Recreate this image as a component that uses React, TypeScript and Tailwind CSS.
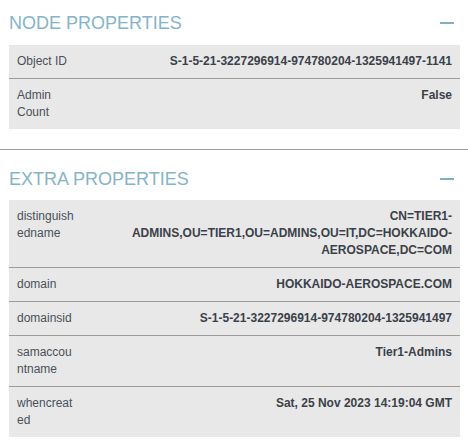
import React from "react";

type Prop = { label: string; value: string };

const nodeProps: Prop[] = [
  { label: "Object ID", value: "S-1-5-21-3227296914-974780204-1325941497-1141" },
  { label: "Admin Count", value: "False" },
];

const extraProps: Prop[] = [
  {
    label: "distinguishedname",
    value: "CN=TIER1-ADMINS,OU=TIER1,OU=ADMINS,OU=IT,DC=HOKKAIDO-AEROSPACE,DC=COM",
  },
  { label: "domain", value: "HOKKAIDO-AEROSPACE.COM" },
  { label: "domainsid", value: "S-1-5-21-3227296914-974780204-1325941497" },
  { label: "samaccountname", value: "Tier1-Admins" },
  { label: "whencreated", value: "Sat, 25 Nov 2023 14:19:04 GMT" },
];

const PropTable: React.FC<{ rows: Prop[] }> = ({ rows }) => (
  <div className="ml-[9px] mr-[8px] bg-[#e8e8e8]">
    {rows.map((row, i) => (
      <div
        key={row.label}
        className={`flex py-[8px] text-[12px] leading-[17px] ${
          i > 0 ? "border-t border-[#9c9c9c]" : ""
        }`}
      >
        <div className="w-[60px] shrink-0 ml-[8px] break-words text-[#4a5058]">{row.label}</div>
        <div className="flex-1 pl-[8px] pr-[8px] text-right font-bold text-[#3b4148]">
          {row.value}
        </div>
      </div>
    ))}
  </div>
);

const SectionHeader: React.FC<{ title: string }> = ({ title }) => (
  <div className="flex items-center justify-between h-[24px] pl-[9px] pr-[14px]">
    <h2 className="text-[18px] leading-[24px] font-normal text-[#84b4ca]">{title}</h2>
    <div className="w-[14px] h-[2px] bg-[#7fb0c8]" />
  </div>
);

const App: React.FC = () => {
  return (
    <div
      className="w-[468px] h-[448px] bg-white overflow-hidden"
      style={{ fontFamily: '"Liberation Sans", Arial, sans-serif' }}
    >
      {/* Node properties */}
      <div className="pt-[11px] pb-[20px]">
        <div className="mb-[10px]">
          <SectionHeader title="NODE PROPERTIES" />
        </div>
        <PropTable rows={nodeProps} />
      </div>

      <div className="h-px bg-[#9c9c9c]" />

      {/* Extra properties */}
      <div className="pt-[17px]">
        <div className="mb-[9px]">
          <SectionHeader title="EXTRA PROPERTIES" />
        </div>
        <PropTable rows={extraProps} />
      </div>
    </div>
  );
};

export default App;
